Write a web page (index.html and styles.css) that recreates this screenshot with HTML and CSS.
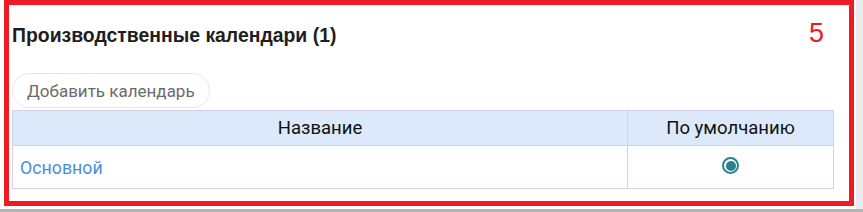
FILE: index.html
```html
<!DOCTYPE html>
<html lang="ru">
<head>
  <meta charset="UTF-8">
  <title>Производственные календари</title>
  <link rel="stylesheet" href="styles.css">
</head>
<body>
  <div class="page">
    <div class="frame">
      <span class="mark">5</span>
      <h2 class="panel-title">Производственные календари (1)</h2>
      <button class="btn">Добавить календарь</button>
      <table class="grid">
        <thead>
          <tr>
            <th class="col-name">Название</th>
            <th class="col-default">По умолчанию</th>
          </tr>
        </thead>
        <tbody>
          <tr>
            <td><a href="#" class="link">Основной</a></td>
            <td class="center"><span class="radio"></span></td>
          </tr>
        </tbody>
      </table>
    </div>
    <div class="scroll"></div>
  </div>
  <div class="bottom-line"></div>
</body>
</html>
```

FILE: styles.css
```css
/* Global */
body {
  margin: 0;
  padding: 0;
  font-family: 'Liberation Sans', Arial, sans-serif;
  background-color: #fff;
  color: #222;
  height: 212px;
  overflow: hidden;
}

.page {
  display: flex;
  height: 209px;
}

/* Red annotation frame */
.frame {
  position: relative;
  width: 850px;
  height: 206px;
  margin-left: 4px;
  box-sizing: border-box;
  border: 5px solid #ed1c24;
  padding: 0 15px 0 3px;
}

.mark {
  position: absolute;
  top: 13px;
  right: 25px;
  font-size: 27px;
  color: #ed1c24;
}

.scroll {
  margin-left: 2px;
  flex: 1;
  background-color: #ebebeb;
}

.bottom-line {
  height: 3px;
  background-color: #b4b4b4;
}

.panel-title {
  margin: 0;
  padding-top: 20px;
  font-size: 19.4px;
  font-weight: bold;
  color: #1e1e1e;
  line-height: 20px;
}

/* Button */
.btn {
  display: block;
  margin-top: 28px;
  height: 35px;
  padding: 0 14px;
  font-family: Roboto, sans-serif;
  font-size: 17px;
  color: #6b6b6b;
  background-color: #fff;
  border: 1px solid #e6e6e6;
  border-radius: 18px;
}

/* Table */
.grid {
  width: 822px;
  margin-top: 2px;
  border-collapse: collapse;
  font-family: Roboto, sans-serif;
  font-size: 17.8px;
}

.grid th,
.grid td {
  border: 1px solid #cfd2e6;
}

.grid th {
  height: 34px;
  padding: 0;
  font-size: 18.5px;
  font-weight: normal;
  color: #111;
  background-color: #dbe9fb;
}

.grid td {
  height: 42px;
  padding: 0 7px;
}

.col-default {
  width: 205px;
}

.center {
  text-align: center;
}

.link {
  color: #4a8fd8;
  text-decoration: none;
}

.radio {
  display: inline-block;
  width: 13px;
  height: 13px;
  border: 2.5px solid #2a8290;
  border-radius: 50%;
  position: relative;
  top: -3px;
  vertical-align: middle;
}

.radio::after {
  content: '';
  position: absolute;
  top: 1.5px;
  left: 1.5px;
  width: 10px;
  height: 10px;
  border-radius: 50%;
  background-color: #2a8290;
}
```
